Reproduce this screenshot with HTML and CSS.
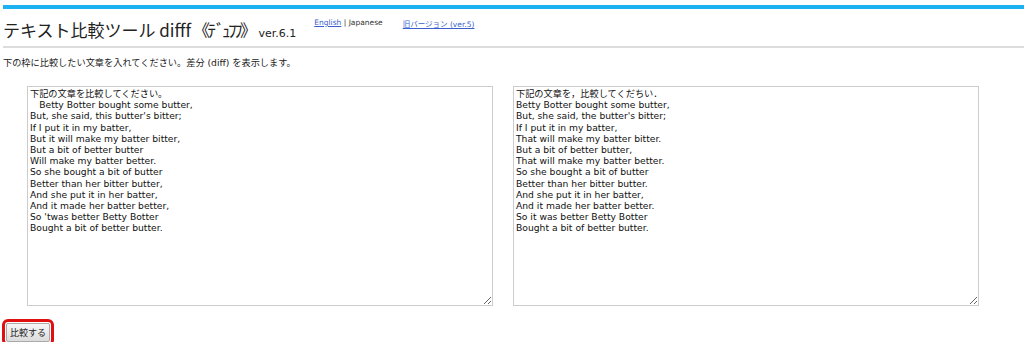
FILE: index.html
```html
<!DOCTYPE html>
<html lang="ja">
<head>
  <meta charset="UTF-8">
  <title>テキスト比較ツール difff《ﾃﾞｭﾌﾌ》</title>
  <link rel="stylesheet" href="styles.css">
</head>
<body>
  <div class="page">
    <div class="header">
      <h1>テキスト比較ツール difff<span class="kana">《ﾃﾞｭﾌﾌ》</span><span class="ver">ver.6.1</span></h1>
      <div class="lang"><a href="#">English</a> | Japanese</div>
      <div class="old"><a href="#">旧バージョン (ver.5)</a></div>
    </div>
    <hr>
    <p class="lead">下の枠に比較したい文章を入れてください。差分 (diff) を表示します。</p>

    <div class="inputs">
      <textarea class="box">下記の文章を比較してください。
　Betty Botter bought some butter,
But, she said, this butter's bitter;
If I put it in my batter,
But it will make my batter bitter,
But a bit of better butter
Will make my batter better.
So she bought a bit of butter
Better than her bitter butter,
And she put it in her batter,
And it made her batter better,
So 'twas better Betty Botter
Bought a bit of better butter.</textarea>
      <textarea class="box">下記の文章を，比較してくだちい．
Betty Botter bought some butter,
But, she said, the butter's bitter;
If I put it in my batter,
That will make my batter bitter.
But a bit of better butter,
That will make my batter better.
So she bought a bit of butter
Better than her bitter butter.
And she put it in her batter,
And it made her batter better.
So it was better Betty Botter
Bought a bit of better butter.</textarea>
    </div>

    <div class="actions">
      <button class="submit">比較する</button>
    </div>
  </div>
</body>
</html>
```

FILE: styles.css
```css
body {
  font-family: "DejaVu Sans", "Noto Sans CJK JP", sans-serif;
  margin: 0;
  padding: 5px 0 0 3px;
  background-color: #fff;
  color: #222;
}
.page {
  border-top: 4px solid #1eb1f1;
}
.header {
  display: flex;
  align-items: flex-start;
  height: 37px;
}
h1 {
  font-family: "Noto Sans CJK JP", sans-serif;
  font-weight: normal;
  font-size: 17px;
  line-height: 22px;
  margin: 10px 0 0 0;
  color: #222;
}
.kana {
  letter-spacing: -2.5px;
  margin-left: 2px;
}
.ver {
  font-family: "DejaVu Sans", sans-serif;
  font-size: 11px;
  margin-left: 4px;
}
.lang, .old {
  font-size: 7.5px;
  margin-top: 9px;
  color: #333;
}
.lang {
  margin-left: 18px;
}
.old {
  margin-left: 20px;
}
a {
  color: #3a5fcd;
}
hr {
  border: none;
  border-top: 2px solid #ddd;
  margin: 0;
}
.lead {
  font-size: 9.2px;
  margin: 7px 0 0 0;
}
.inputs {
  display: flex;
  gap: 20px;
  margin: 17px 0 0 24px;
}
.box {
  width: 466px;
  height: 220px;
  box-sizing: border-box;
  border: 1px solid #ccc;
  padding: 1px 2px;
  font-family: "DejaVu Sans", "Noto Sans CJK JP", sans-serif;
  font-size: 9.2px;
  line-height: 11.2px;
  color: #111;
  margin: 0;
}
.actions {
  margin-top: 15px;
}
.submit {
  font-family: "Noto Sans CJK JP", sans-serif;
  font-size: 9px;
  padding: 2px 3px;
  border: 1px solid #aaa;
  border-radius: 2px;
  background: linear-gradient(#f6f6f6, #dcdcdc);
  color: #222;
  outline: 3px solid #e01010;
  outline-offset: 1px;
  margin-left: 3px;
}
```
